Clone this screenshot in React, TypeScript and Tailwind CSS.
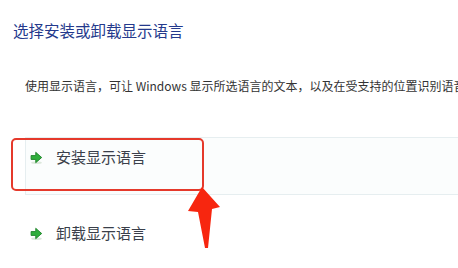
import React from 'react'

const font = { fontFamily: '"Noto Sans CJK SC", "Noto Sans", sans-serif' }

function GoArrow() {
  return (
    <svg width="13" height="13" viewBox="0 0 12 12" className="shrink-0">
      <ellipse cx="6" cy="10.8" rx="5" ry="1.1" fill="#dce8dc" />
      <path d="M1 4.2 H5.3 V1.2 L10.8 6 L5.3 10.8 V7.8 H1 Z" fill="#2fae3c" stroke="#1d7f27" strokeWidth="0.8" strokeLinejoin="round" />
    </svg>
  )
}

function LinkRow({ label, highlighted }: { label: string; highlighted?: boolean }) {
  return (
    <div
      className={
        highlighted
          ? 'flex h-[58px] items-start gap-[13px] border-y border-l border-[#e6eef0] bg-[#fbfdfd] pl-[4px] pt-[8px]'
          : 'flex h-[58px] items-start gap-[13px] pl-[5px] pt-[9px]'
      }
    >
      <div className="pt-[5px]">
        <GoArrow />
      </div>
      <span className="text-[15px] leading-[22px] text-[#3a3f4a]">{label}</span>
    </div>
  )
}

export default function App() {
  return (
    <div className="relative h-[268px] w-[458px] overflow-hidden bg-white" style={font}>
      <h1 className="pl-[13px] pt-[19px] text-[15.5px] font-normal leading-[22px] text-[#24398c]">
        选择安装或卸载显示语言
      </h1>
      <p className="mt-[36px] whitespace-nowrap pl-[25px] text-[12px] leading-[18px] text-[#333]">
        使用显示语言，可让 Windows 显示所选语言的文本，以及在受支持的位置识别语音和手写。
      </p>
      <div className="ml-[25px] mt-[42px]">
        <LinkRow label="安装显示语言" highlighted />
        <div className="pt-[18px]">
          <LinkRow label="卸载显示语言" />
        </div>
      </div>

      <div className="absolute left-[11px] top-[138px] h-[53px] w-[193px] rounded-[5px] border-2 border-[#e5392b]" />
      <svg className="absolute left-0 top-0" width="458" height="268" viewBox="0 0 458 268">
        <path
          d="M202 187 L220 207 L212 209 L208 248 L205 248 L198 212 L188 211 Z"
          fill="#f7260f"
          strokeLinejoin="round"
        />
      </svg>
    </div>
  )
}
